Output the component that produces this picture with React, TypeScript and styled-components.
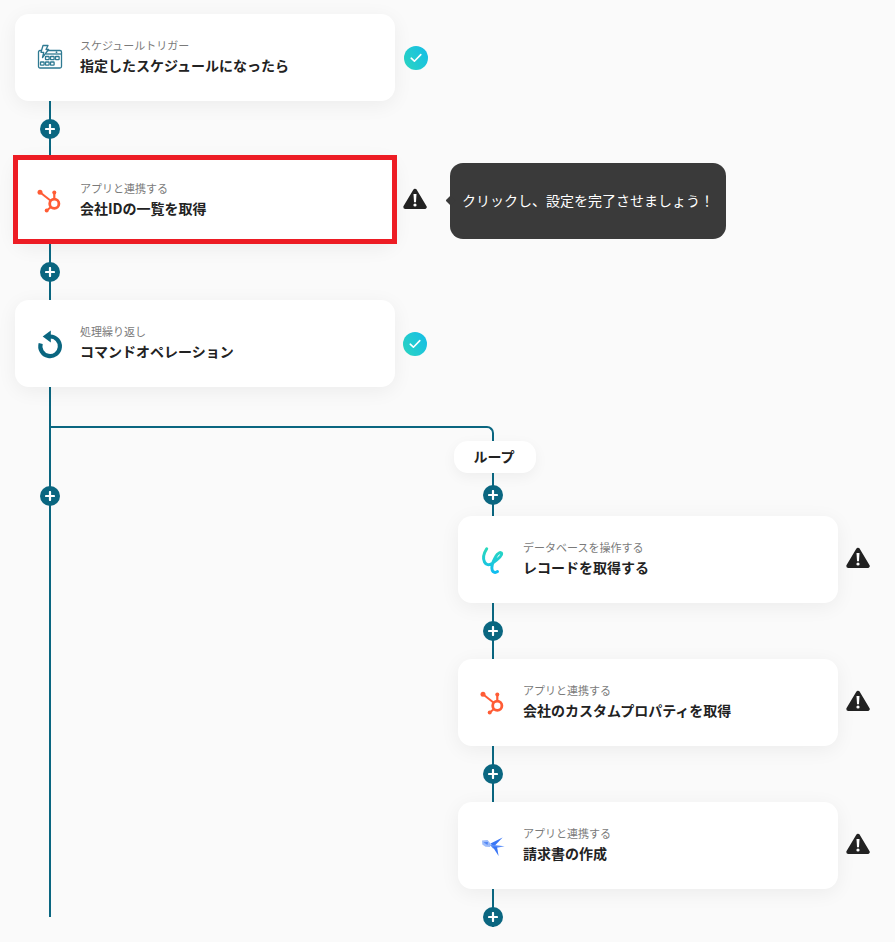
import React from "react";
import styled, { createGlobalStyle } from "styled-components";

const TEAL = "#0a6680";

const Global = createGlobalStyle`
  html, body { margin: 0; padding: 0; background: #fafafa; }
  body { font-family: "Noto Sans CJK JP", "Noto Sans", sans-serif; }
  #root { min-height: 942px; }
`;

const Page = styled.div`
  box-sizing: border-box;
  height: 942px;
  overflow: hidden;
  padding: 14px 0 0 15px;
  background: #fafafa;
`;

const Row = styled.div`
  display: flex;
  align-items: center;
  height: 87px;
`;

const Card = styled.div`
  position: relative;
  box-sizing: border-box;
  flex: none;
  display: flex;
  align-items: center;
  gap: 16px;
  width: 380px;
  height: 87px;
  padding-left: 21px;
  background: #fff;
  border-radius: 14px;
  box-shadow: 0 4px 20px rgba(0, 0, 0, 0.06);
`;

const Highlight = styled.div`
  position: absolute;
  inset: -2px -2px 0 -2px;
  border: 5px solid #ed1c24;
`;

const IconBox = styled.div`
  flex: none;
  width: 28px;
  height: 28px;
  svg { display: block; overflow: visible; }
`;

const Texts = styled.div`
  display: flex;
  flex-direction: column;
  gap: 2px;
  margin-top: -4px;
`;

const Label = styled.div`
  font-size: 11px;
  line-height: 16px;
  color: #7a7a7a;
`;

const Title = styled.div`
  font-size: 14px;
  line-height: 20px;
  font-weight: 700;
  color: #222;
`;

const Connector = styled.div<{ $height: number; $top: number }>`
  box-sizing: border-box;
  position: relative;
  width: 2px;
  height: ${(p) => p.$height}px;
  margin-left: 34px;
  padding-top: ${(p) => p.$top}px;
  background: ${TEAL};
  display: flex;
  flex-direction: column;
  align-items: center;
`;

const PlusButton = styled.div`
  flex: none;
  width: 20px;
  height: 20px;
  border-radius: 50%;
  background: ${TEAL};
  display: flex;
  align-items: center;
  justify-content: center;
`;

const CheckBadge = styled.div<{ $gap: number }>`
  flex: none;
  width: 24px;
  height: 24px;
  margin-left: ${(p) => p.$gap}px;
  border-radius: 50%;
  background: linear-gradient(60deg, #2cd6c0, #14bce8);
  display: flex;
  align-items: center;
  justify-content: center;
`;

const WarnWrap = styled.div`
  flex: none;
  width: 24px;
  height: 22px;
  margin: -3px 0 0 8px;
  svg { display: block; }
`;

const Tooltip = styled.div`
  position: relative;
  box-sizing: border-box;
  flex: none;
  width: 276px;
  height: 76px;
  margin: 1px 0 0 23px;
  padding: 0 0 2px 12px;
  display: flex;
  align-items: center;
  background: #3a3a3a;
  border-radius: 13px;
  color: #fff;
  font-size: 14px;
  white-space: nowrap;
  &::before {
    content: "";
    position: absolute;
    left: -3px;
    top: 34px;
    width: 7px;
    height: 7px;
    background: #3a3a3a;
    transform: rotate(45deg);
    border-radius: 1px;
  }
`;

const Branch = styled.div`
  display: flex;
  margin-left: 34px;
`;

const Rail = styled.div`
  flex: none;
  width: 2px;
  height: 530px;
  background: ${TEAL};
  display: flex;
  flex-direction: column;
  align-items: center;
  padding-top: 99px;
  box-sizing: border-box;
`;

const BranchBody = styled.div`
  flex: none;
  padding-top: 39px;
`;

const Elbow = styled.div`
  box-sizing: border-box;
  width: 443px;
  height: 15px;
  border-top: 2px solid ${TEAL};
  border-right: 2px solid ${TEAL};
  border-top-right-radius: 7px;
`;

const LoopColumn = styled.div`
  margin-left: 407px;
`;

const LoopPill = styled.div`
  position: relative;
  box-sizing: border-box;
  width: 82px;
  height: 32px;
  margin-left: -4px;
  padding: 0 2px 2px 0;
  display: flex;
  align-items: center;
  justify-content: center;
  background: #fff;
  border-radius: 14px;
  box-shadow: 0 4px 14px rgba(0, 0, 0, 0.05);
  font-size: 14px;
  font-weight: 700;
  color: #222;
`;

const Plus = () => (
  <PlusButton>
    <svg width="10" height="10" viewBox="0 0 10 10">
      <path d="M5 1v8M1 5h8" stroke="#fff" strokeWidth="2.2" strokeLinecap="round" />
    </svg>
  </PlusButton>
);

const Check = ({ gap }: { gap: number }) => (
  <CheckBadge $gap={gap}>
    <svg width="12" height="10" viewBox="0 0 12 10" fill="none">
      <path d="M1.2 5.2 4.4 8.2 10.8 1.6" stroke="#fff" strokeWidth="1.6" strokeLinecap="round" strokeLinejoin="round" />
    </svg>
  </CheckBadge>
);

const Warn = () => (
  <WarnWrap>
    <svg width="24" height="22" viewBox="0 0 24 22">
      <path d="M12 2.8 21.7 19H2.3Z" fill="#222" stroke="#222" strokeWidth="4" strokeLinejoin="round" />
      <path d="M10.5 6h3l-.5 8.2h-2Z" fill="#fff" />
      <circle cx="12" cy="17" r="1.6" fill="#fff" />
    </svg>
  </WarnWrap>
);

const ScheduleIcon = () => (
  <svg width="28" height="28" viewBox="0 0 28 28" fill="none">
    <g stroke="#2f7a92" strokeWidth="1.3">
      <path d="M9 6.5H24a1.5 1.5 0 0 1 1.5 1.5V22.5A1.5 1.5 0 0 1 24 24H4a1.5 1.5 0 0 1-1.5-1.5V8A1.5 1.5 0 0 1 4 6.5h1" />
      <path d="M10 10h15.5" />
      <rect x="9.5" y="12.5" width="3.6" height="3.2" rx=".5" />
      <rect x="14.5" y="12.5" width="3.6" height="3.2" rx=".5" />
      <rect x="19.5" y="12.5" width="3.6" height="3.2" rx=".5" />
      <rect x="4.5" y="18" width="3.6" height="3.2" rx=".5" />
      <rect x="9.5" y="18" width="3.6" height="3.2" rx=".5" />
      <rect x="14.5" y="18" width="3.6" height="3.2" rx=".5" />
      <path d="M7 1.5h5l-2 4h2.6L6.5 13.5l1.2-5.2H5Z" fill="#fff" strokeLinejoin="round" />
    </g>
    <circle cx="20.5" cy="8.2" r=".9" fill="#2f7a92" />
  </svg>
);

const HubspotIcon = () => (
  <svg width="28" height="28" viewBox="0 0 28 28" fill="none">
    <g stroke="#ff5c35">
      <circle cx="18.3" cy="16.8" r="4.6" strokeWidth="2.8" />
      <path d="M4 5.2 15 14" strokeWidth="2" />
      <path d="M18.3 6v6.5" strokeWidth="2.2" />
      <path d="M10.7 23.5 15 20" strokeWidth="2" />
    </g>
    <g fill="#ff5c35">
      <circle cx="4" cy="5.2" r="2.5" />
      <circle cx="18.3" cy="5.5" r="2" />
      <circle cx="10.7" cy="23.5" r="2" />
    </g>
  </svg>
);

const LoopIcon = () => (
  <svg width="28" height="28" viewBox="0 0 28 28" fill="none">
    <path d="M14 6.5A9.8 9.8 0 1 1 4.7 13.5" stroke={TEAL} strokeWidth="4.2" />
    <path d="M6.7 6.6 14.8 0.6V12.6Z" fill={TEAL} />
  </svg>
);

const DatabaseIcon = () => (
  <svg width="28" height="28" viewBox="0 0 28 28" fill="none">
    <defs>
      <linearGradient id="yoomDb" x1="0" y1="0" x2="0" y2="1">
        <stop offset="0" stopColor="#2ad8bc" />
        <stop offset="1" stopColor="#10bdf0" />
      </linearGradient>
    </defs>
    <path
      d="M7.7 2.8C5 7 3.5 12 5.5 16 7 19 10 19.5 13 17.5 18 14 23.5 10 22.7 7.5 22 5.5 18.5 7 16.5 11 14 15.5 12 21 13.3 24.5 14 26.5 16.5 27 18.5 25.6"
      stroke="url(#yoomDb)"
      strokeWidth="3"
      strokeLinecap="round"
    />
  </svg>
);

const InvoiceIcon = () => (
  <svg width="28" height="28" viewBox="0 0 28 28">
    <path d="M3 8.6 8.5 8 11.5 11.5 11 15 6.5 14.8 3.3 12.5Z" fill="#9dbcfa" />
    <path d="M4.5 10.2 9 10 8.5 13Z" fill="#4f85f6" />
    <path d="M23.6 5.4 11.5 11.6 14.5 15Z" fill="#3a76f5" />
    <path d="M10.5 12.4 25.6 14.3 14 16.4Z" fill="#5a8ef8" />
    <path d="M13.5 14.5 19.6 24 18 14.8Z" fill="#3a76f5" />
  </svg>
);

const Step = ({ icon, label, title, highlight }: { icon: React.ReactNode; label: string; title: string; highlight?: boolean }) => (
  <Card>
    <IconBox>{icon}</IconBox>
    <Texts>
      <Label>{label}</Label>
      <Title>{title}</Title>
    </Texts>
    {highlight && <Highlight />}
  </Card>
);

export default function App() {
  return (
    <Page>
      <Global />
      <Row>
        <Step icon={<ScheduleIcon />} label="スケジュールトリガー" title="指定したスケジュールになったら" />
        <Check gap={9} />
      </Row>
      <Connector $height={56} $top={18}><Plus /></Connector>
      <Row>
        <Step icon={<HubspotIcon />} label="アプリと連携する" title="会社IDの一覧を取得" highlight />
        <Warn />
        <Tooltip>クリックし、設定を完了させましょう！</Tooltip>
      </Row>
      <Connector $height={56} $top={18}><Plus /></Connector>
      <Row>
        <Step icon={<LoopIcon />} label="処理繰り返し" title="コマンドオペレーション" />
        <Check gap={8} />
      </Row>
      <Branch>
        <Rail><Plus /></Rail>
        <BranchBody>
          <Elbow />
          <LoopColumn>
            <LoopPill>ループ</LoopPill>
            <Connector $height={43} $top={12}><Plus /></Connector>
            <Row>
              <Step icon={<DatabaseIcon />} label="データベースを操作する" title="レコードを取得する" />
              <Warn />
            </Row>
            <Connector $height={56} $top={18}><Plus /></Connector>
            <Row>
              <Step icon={<HubspotIcon />} label="アプリと連携する" title="会社のカスタムプロパティを取得" />
              <Warn />
            </Row>
            <Connector $height={56} $top={18}><Plus /></Connector>
            <Row>
              <Step icon={<InvoiceIcon />} label="アプリと連携する" title="請求書の作成" />
              <Warn />
            </Row>
            <Connector $height={38} $top={18}><Plus /></Connector>
          </LoopColumn>
        </BranchBody>
      </Branch>
    </Page>
  );
}
